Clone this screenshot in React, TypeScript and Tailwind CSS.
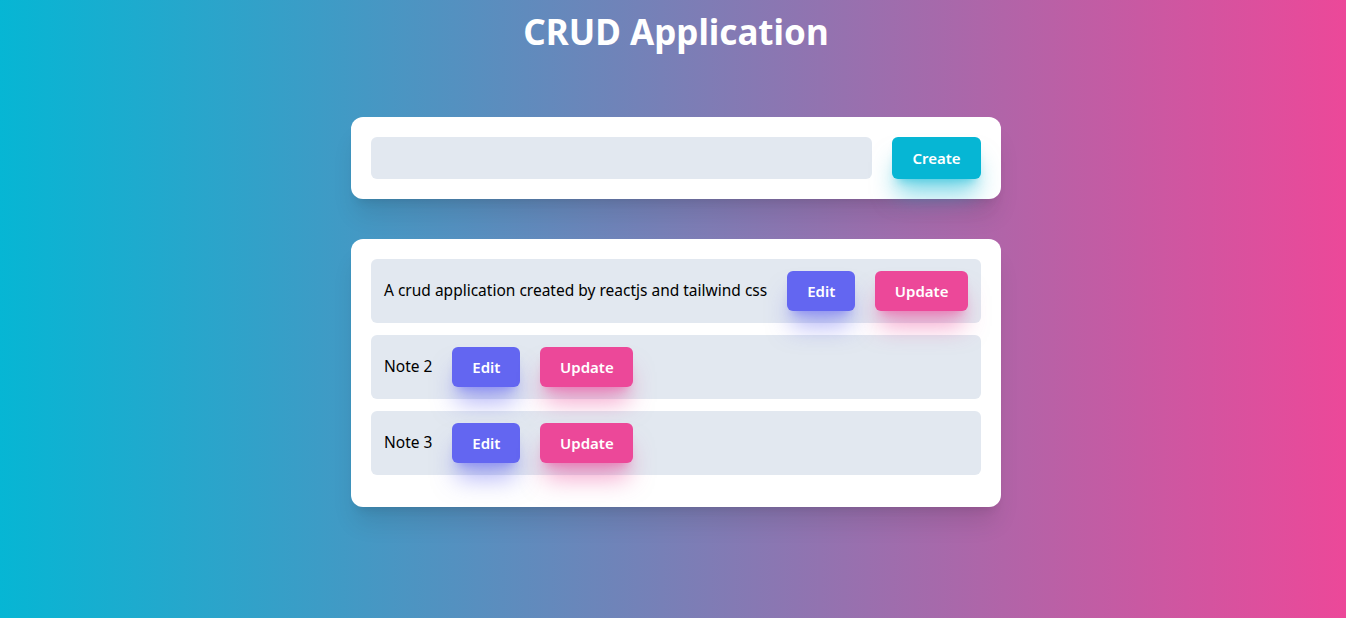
import React, { useState } from 'react';

const notes = [
  'A crud application created by reactjs and tailwind css',
  'Note 2',
  'Note 3',
];

export default function App() {
  const [text, setText] = useState('');

  return (
    <div className="min-h-screen w-full bg-[linear-gradient(to_right,#06b6d4,#ec4899)] pl-[6px] font-['Noto_Sans',sans-serif]">
      <h1 className="pt-3 text-center text-[35px] leading-10 font-bold text-white">CRUD Application</h1>

      {/* Create */}
      <div className="mx-auto mt-[65px] flex w-[650px] items-center gap-5 rounded-xl bg-white p-5 shadow-xl">
        <input
          value={text}
          onChange={(e) => setText(e.target.value)}
          className="h-[42px] flex-1 rounded-md bg-[#e2e8f0] px-3 outline-none"
        />
        <button className="h-[42px] w-[89px] rounded-md bg-[#06b6d4] text-[15px] font-semibold text-white shadow-xl shadow-[#06b6d4]/50">
          Create
        </button>
      </div>

      {/* List */}
      <div className="mx-auto mt-10 w-[650px] rounded-xl bg-white px-5 pt-5 pb-5 shadow-xl">
        {notes.map((note, i) => (
          <div key={i} className="mb-3 flex items-center rounded-md bg-[#e2e8f0] py-3 pr-3 pl-[13px]">
            <span className="mr-5 whitespace-nowrap text-[15.5px] text-black">{note}</span>
            <button className="h-10 w-[68px] shrink-0 rounded-md bg-[#6366f1] text-[15px] font-semibold text-white shadow-xl shadow-[#6366f1]/50">
              Edit
            </button>
            <button className="ml-5 h-10 w-[93px] shrink-0 rounded-md bg-[#ec4899] text-[15px] font-semibold text-white shadow-xl shadow-[#ec4899]/50">
              Update
            </button>
          </div>
        ))}
      </div>
    </div>
  );
}
